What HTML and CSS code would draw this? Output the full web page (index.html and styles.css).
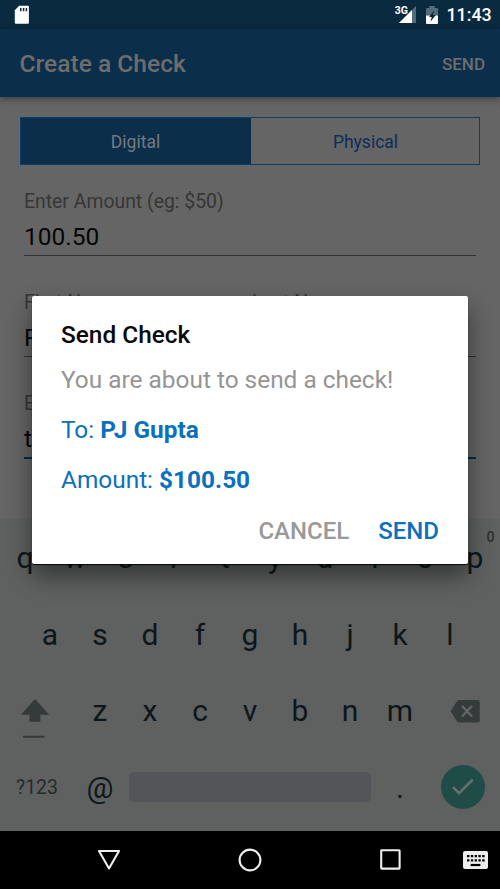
FILE: index.html
```
<!DOCTYPE html>
<html lang="en">
<head>
<meta charset="utf-8">
<title>Create a Check</title>
<link rel="stylesheet" href="styles.css">
</head>
<body>
<div class="phone">
  <header class="status">
    <svg class="sd" width="16" height="20" viewBox="0 0 16 20"><path d="M5.2 .8h8.7q1 0 1 1v15.9q0 1-1 1H1.8q-1 0-1-1V5.2z" fill="#fff"/><path d="M6.8 3v3.2M9.6 3v3.2M12.4 3v3.2" stroke="#0a2a40" stroke-width="1.5"/></svg>
    <span class="net">3G</span>
    <svg class="signal" width="18" height="18" viewBox="0 0 18 18"><path d="M18 0v17H1z" fill="#536b7b"/><path d="M14 4v13H1z" fill="#fff"/></svg>
    <svg class="battery" width="12" height="18" viewBox="0 0 12 18"><path d="M3.5 0h5v2H11q1 0 1 1v6.5H0V3q0-1 1-1h2.5z" fill="#536b7b"/><path d="M0 9.5h12V17q0 1-1 1H1q-1 0-1-1z" fill="#fff"/><path d="M8.2 4.2 3 11h2.7l-1.2 4.8L9.8 9H6.9z" fill="#0a2a40"/></svg>
    <span class="clock">11:43</span>
  </header>
  <div class="appbar"><h1>Create a Check</h1><span class="appsend">SEND</span></div>
  <main class="form">
    <div class="tabs"><div class="tab on">Digital</div><div class="tab">Physical</div></div>
    <div class="field"><label>Enter Amount (eg: $50)</label><div class="value">100.50</div></div>
    <div class="names">
      <div class="field"><label>First Name</label><div class="value">P</div></div>
      <div class="field"><label>Last Name</label></div>
    </div>
    <div class="field email"><label>E</label><div class="value">t</div></div>
  </main>
  <section class="keyboard">
    <div class="row"><span>q</span><span>w</span><span>e</span><span>r</span><span>t</span><span>y</span><span>u</span><span>i</span><span>o</span><span class="p">p<sup>0</sup></span></div>
    <div class="row inset"><span>a</span><span>s</span><span>d</span><span>f</span><span>g</span><span>h</span><span>j</span><span>k</span><span>l</span></div>
    <div class="row">
      <div class="wide"><svg width="29" height="40" viewBox="0 0 29 40"><path d="M14 0 28.2 15.7H19.3V22.7H8.5V15.7H-.2z" fill="#343b3a"/><path d="M2 37.7H23.4" stroke="#343b3a" stroke-width="2"/></svg></div>
      <span>z</span><span>x</span><span>c</span><span>v</span><span>b</span><span>n</span><span>m</span>
      <div class="wide right"><svg width="30" height="23" viewBox="0 0 30 23"><path d="M9 0H27.7q2 0 2 2V20.5q0 2-2 2H9Q7.8 22.5 7 21.3L.6 11.3 7 1.2Q7.8 0 9 0z" fill="#343b3a"/><path d="m12 6 10 10.5M22 6 12 16.5" stroke="#626564" stroke-width="2.5"/></svg></div>
    </div>
    <div class="row last">
      <div class="sym">?123</div><span class="at">@</span><div class="space"></div><span class="dot">.</span>
      <div class="done"><svg width="22" height="18" viewBox="0 0 22 18"><path d="M1 9.2 7 15.2 20.7 1.5" fill="none" stroke="#656f6d" stroke-width="2.5"/></svg></div>
    </div>
  </section>
  <nav class="nav">
    <div><svg width="24" height="22" viewBox="0 0 24 22"><path d="M2 2H22L12 19.5z" fill="none" stroke="#eee" stroke-width="2.1" stroke-linejoin="round"/></svg></div>
    <div><svg width="24" height="24" viewBox="0 0 24 24"><circle cx="12" cy="12" r="10.4" fill="none" stroke="#eee" stroke-width="2.1"/></svg></div>
    <div><svg width="21" height="21" viewBox="0 0 21 21"><rect x="1.2" y="1.2" width="18.4" height="18.4" rx=".5" fill="none" stroke="#eee" stroke-width="2.1"/></svg></div>
    <svg class="ime" width="25" height="18" viewBox="0 0 25 18"><rect width="25" height="18" rx="2" fill="#eee"/><path d="M4 5.2H21.8M4 9.3H21.8" stroke="#000" stroke-width="2.3" stroke-dasharray="2.4 1.4"/><path d="M7.6 14H17.4" stroke="#000" stroke-width="2.2"/></svg>
  </nav>
  <section class="dialog">
    <h2>Send Check</h2>
    <p class="about">You are about to send a check!</p>
    <p class="to">To: <b>PJ Gupta</b></p>
    <p class="amount">Amount: <b>$100.50</b></p>
    <div class="actions"><span class="cancel">CANCEL</span><span class="send">SEND</span></div>
  </section>
</div>
</body>
</html>
```
FILE: styles.css
```
* { box-sizing: border-box; }
body { margin: 0; font-family: Roboto, "Liberation Sans", sans-serif; }
h1, h2, p { margin: 0; }
svg { display: block; flex: none; }
.phone { position: relative; width: 500px; height: 889px; overflow: hidden; background: #656565; display: flex; flex-direction: column; }
.status { height: 29px; flex: none; background: #0a2a40; color: #fff; display: flex; align-items: flex-start; padding: 5px 10px 0 14px; }
.net { margin-left: auto; font-size: 10.5px; font-weight: 700; line-height: 11px; }
.signal { margin: 1px 0 0 -10px; }
.battery { margin: 1px 0 0 10px; }
.clock { margin-left: 8.5px; width: 43.5px; font-size: 17.8px; line-height: 20px; font-weight: 500; white-space: nowrap; }
.appbar { height: 68px; flex: none; background: #0b2e4a; color: #6d6d6d; display: flex; align-items: center; justify-content: space-between; padding: 1px 15px 0 19.5px; box-shadow: 0 2px 7px rgba(0,0,0,.4); }
.appbar h1 { font-size: 24.6px; line-height: 28px; font-weight: 500; }
.appsend { font-size: 17px; line-height: 20px; font-weight: 500; }
.form { height: 421px; flex: none; padding: 20px 20px 0; }
.tabs { display: flex; height: 48px; border: 1px solid #0b3f6c; color: #0b2e57; font-size: 17.5px; line-height: 48px; text-align: center; }
.tab { flex: 1; padding-left: 1px; }
.tab.on { background: #0b2e4a; color: #747b80; flex: 0 0 230px; padding: 0 1px 0 0; }
.field { margin: 24px 4px 0; border-bottom: 1px solid #333; height: 67px; flex: 1; }
.field label { display: block; font-size: 19.4px; line-height: 25px; height: 24px; color: #363636; white-space: nowrap; }
.value { font-size: 24.5px; line-height: 30px; margin-top: 9px; color: #050505; }
.names { display: flex; margin: 34px 4px 0; }
.names .field { margin: 0; }
.names .field + .field { padding-left: 4px; }
.field.email { margin-top: 34px; border-bottom: 2px solid #06294b; height: 68px; }
.keyboard { height: 312.6px; flex: none; background: #5e615f; color: #0d171b; padding-top: 2px; }
.row { display: flex; height: 76.6px; align-items: center; font-size: 30px; line-height: 40px; }
.row span { width: 50px; flex: none; text-align: center; }
.row .p { position: relative; }
.row sup { position: absolute; right: 5.5px; top: -10px; font-size: 14px; line-height: 18px; color: #2c302f; font-weight: 500; }
.inset { padding-left: 25px; }
.wide { width: 75px; padding: 15px 0 0 21px; }
.wide.right { padding: 0 0 0 25px; }
.sym { width: 75px; padding-left: 16px; font-size: 19.4px; color: #252c2d; }
.space { width: 242px; height: 30px; margin: 0 0 2px 4px; border-radius: 5px; background: #545558; }
.row .dot { width: 58px; }
.done { width: 44px; height: 44px; margin: 0 0 2px 11.5px; border-radius: 50%; background: #204c47; display: flex; align-items: center; justify-content: center; }
.nav { height: 58.4px; flex: none; background: #000; display: flex; align-items: center; padding-left: 39px; }
.nav div { width: 140.5px; display: flex; justify-content: center; }
.ime { margin-left: 2.5px; }
.dialog { position: absolute; left: 32px; top: 296px; width: 436px; height: 268px; background: #fff; border-radius: 2px; padding: 24px 29px 0; box-shadow: 0 1px 1px rgba(0,0,0,.9), 0 12px 24px rgba(0,0,0,.45); font-size: 24.4px; line-height: 30px; white-space: nowrap; color: #0b70bd; }
.dialog h2 { font-size: 24.4px; line-height: 30px; font-weight: 500; color: #0a0a0a; }
.about { margin-top: 15px; color: #959595; }
.to, .amount { margin-top: 20px; }
.actions { display: flex; justify-content: flex-end; gap: 29px; margin-top: 21px; font-size: 24px; font-weight: 500; }
.cancel { color: #999; }
```
